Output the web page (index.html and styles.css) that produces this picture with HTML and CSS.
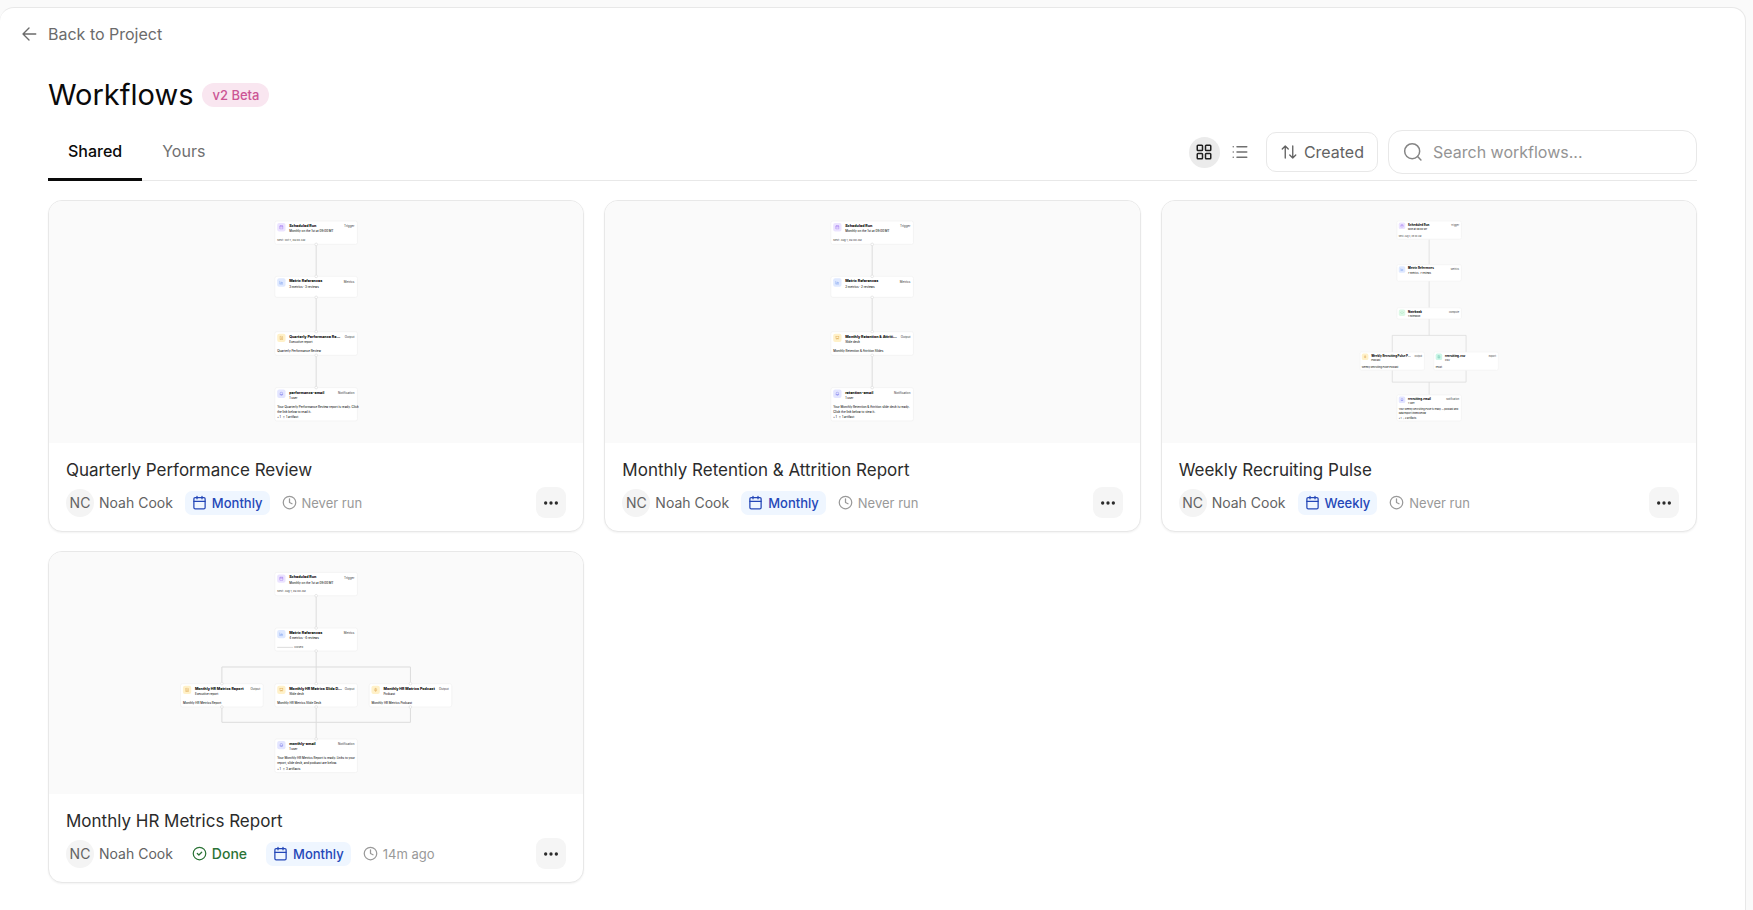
FILE: index.html
```html
<!DOCTYPE html>
<html lang="en">
<head>
<meta charset="UTF-8">
<meta name="viewport" content="width=device-width, initial-scale=1.0">
<title>Workflows</title>
<link rel="stylesheet" href="styles.css">
</head>
<body>
<!-- Shared icons -->
<svg class="sprite" aria-hidden="true">
  <symbol id="i-calendar" viewBox="0 0 24 24"><rect x="3" y="4" width="18" height="18" rx="2"/><path d="M8 2v4M16 2v4M3 10h18"/></symbol>
  <symbol id="i-clock" viewBox="0 0 24 24"><circle cx="12" cy="12" r="10"/><path d="M12 6v6l4 2"/></symbol>
  <symbol id="i-check" viewBox="0 0 24 24"><circle cx="12" cy="12" r="10"/><path d="m8.500 12 2.500 2.500 4.500-4.500"/></symbol>
  <symbol id="i-more" viewBox="0 0 24 24"><circle cx="4" cy="12" r="2.500"/><circle cx="12" cy="12" r="2.500"/><circle cx="20" cy="12" r="2.500"/></symbol>
  <symbol id="i-chart" viewBox="0 0 24 24"><path d="M3 3v18h18M8 17v-5M13 17V8M18 17v-7"/></symbol>
  <symbol id="i-file" viewBox="0 0 24 24"><path d="M5 2h10l4 4v16H5zM9 11h6M9 16h6"/></symbol>
  <symbol id="i-slides" viewBox="0 0 24 24"><path d="M2 4h20M4 4v12h16V4M8 21l4-5 4 5"/></symbol>
  <symbol id="i-mic" viewBox="0 0 24 24"><rect x="9" y="2" width="6" height="12" rx="3"/><path d="M5 11a7 7 0 0 0 14 0M12 18v4"/></symbol>
  <symbol id="i-bell" viewBox="0 0 24 24"><path d="M5 17V10a7 7 0 0 1 14 0v7zM3 17h18M10 21h4"/></symbol>
  <symbol id="i-code" viewBox="0 0 24 24"><path d="m8 6-6 6 6 6M16 6l6 6-6 6"/></symbol>
</svg>

<main class="panel">
  <a href="#" class="back-link">
    <svg class="icon" viewBox="0 0 24 24" width="18" height="18"><path d="M21 12H4M12 4l-8 8 8 8"/></svg>
    <span>Back to Project</span>
  </a>

  <div class="content">
    <div class="heading">
      <h1>Workflows</h1>
      <span class="beta">v2 Beta</span>
    </div>

    <div class="toolbar">
      <nav class="tabs">
        <a href="#" class="tab active">Shared</a>
        <a href="#" class="tab">Yours</a>
      </nav>
      <div class="controls">
        <div class="view-toggle">
          <button class="view-btn selected" aria-label="Grid view">
            <svg class="icon" viewBox="0 0 24 24" width="18" height="18"><rect x="3" y="3" width="7" height="7" rx="1"/><rect x="14" y="3" width="7" height="7" rx="1"/><rect x="3" y="14" width="7" height="7" rx="1"/><rect x="14" y="14" width="7" height="7" rx="1"/></svg>
          </button>
          <button class="view-btn" aria-label="List view">
            <svg class="icon" viewBox="0 0 24 24" width="18" height="18"><path d="M8 5h13M8 12h13M8 19h13M3 5h0M3 12h0M3 19h0"/></svg>
          </button>
        </div>
        <button class="sort-btn">
          <svg class="icon" viewBox="0 0 24 24" width="18" height="18"><path d="M7 20V4M3 8l4-4 4 4M17 4v16M13 16l4 4 4-4"/></svg>
          Created
        </button>
        <label class="search">
          <svg class="icon" viewBox="0 0 24 24" width="20" height="20"><circle cx="11" cy="11" r="9"/><path d="m17.500 17.500 4 4"/></svg>
          <input type="text" placeholder="Search workflows..." aria-label="Search workflows">
        </label>
      </div>
    </div>

    <div class="grid">
      <article class="card">
        <svg class="preview" viewBox="-802 0 1604 726">
          <path class="edge" d="M0 130V226M0 289V392M0 463V560"/>
          <g transform="translate(-124 60)">
            <rect class="node" width="248" height="70" rx="6"/>
            <rect class="tile violet" x="7" y="6" width="25" height="25" rx="6"/><use class="violet" href="#i-calendar" x="13" y="12" width="13" height="13"/>
            <text class="name" x="43" y="18">Scheduled Run</text><text class="kind" x="239" y="19">Trigger</text>
            <text class="sub" x="43" y="34">Monthly on the 1st at 09:00 MT</text><text class="note" x="7" y="59">Next: Oct 1, 09:00 AM</text>
          </g>
          <g transform="translate(-124 226)">
            <rect class="node" width="248" height="63" rx="6"/>
            <rect class="tile blue" x="7" y="6" width="25" height="25" rx="6"/><use class="blue" href="#i-chart" x="13" y="12" width="13" height="13"/>
            <text class="name" x="43" y="18">Metric References</text><text class="kind" x="239" y="19">Metrics</text>
            <text class="sub" x="43" y="34">3 metrics · 3 reviews</text>
          </g>
          <g transform="translate(-124 392)">
            <rect class="node" width="248" height="71" rx="6"/>
            <rect class="tile amber" x="7" y="6" width="25" height="25" rx="6"/><use class="amber" href="#i-file" x="13" y="12" width="13" height="13"/>
            <text class="name" x="43" y="18">Quarterly Performance Re...</text><text class="kind" x="239" y="19">Output</text>
            <text class="sub" x="43" y="34">Executive report</text><text class="body" x="7" y="62">Quarterly Performance Review</text>
          </g>
          <g transform="translate(-124 560)">
            <rect class="node" width="248" height="100" rx="6"/>
            <rect class="tile indigo" x="7" y="6" width="25" height="25" rx="6"/><use class="indigo" href="#i-bell" x="13" y="12" width="13" height="13"/>
            <text class="name" x="43" y="18">performance-email</text><text class="kind" x="239" y="19">Notification</text>
            <text class="sub" x="43" y="34">1 user</text>
            <text class="body" x="7" y="60">Your Quarterly Performance Review report is ready. Click</text><text class="body" x="7" y="75">the link below to read it.</text>
            <text class="body" x="7" y="92">◦ 1 &nbsp; ▯ 1 artifact</text>
          </g>
          <g class="port"><circle cy="130" r="4"/><circle cy="226" r="4"/><circle cy="289" r="4"/><circle cy="392" r="4"/><circle cy="463" r="4"/><circle cy="560" r="4"/></g>
        </svg>
        <div class="card-info">
          <h2>Quarterly Performance Review</h2>
          <div class="meta">
            <span class="owner"><span class="avatar">NC</span>Noah Cook</span>
            <span class="chip"><svg class="icon" width="15" height="15"><use href="#i-calendar"/></svg>Monthly</span>
            <span class="last-run"><svg class="icon" width="15" height="15"><use href="#i-clock"/></svg>Never run</span>
            <button class="more" aria-label="More actions"><svg width="16" height="16"><use href="#i-more"/></svg></button>
          </div>
        </div>
      </article>

      <article class="card">
        <svg class="preview" viewBox="-802 0 1604 726">
          <path class="edge" d="M0 130V226M0 289V392M0 463V560"/>
          <g transform="translate(-124 60)">
            <rect class="node" width="248" height="70" rx="6"/>
            <rect class="tile violet" x="7" y="6" width="25" height="25" rx="6"/><use class="violet" href="#i-calendar" x="13" y="12" width="13" height="13"/>
            <text class="name" x="43" y="18">Scheduled Run</text><text class="kind" x="239" y="19">Trigger</text>
            <text class="sub" x="43" y="34">Monthly on the 1st at 09:00 MT</text><text class="note" x="7" y="59">Next: Aug 1, 09:00 AM</text>
          </g>
          <g transform="translate(-124 226)">
            <rect class="node" width="248" height="63" rx="6"/>
            <rect class="tile blue" x="7" y="6" width="25" height="25" rx="6"/><use class="blue" href="#i-chart" x="13" y="12" width="13" height="13"/>
            <text class="name" x="43" y="18">Metric References</text><text class="kind" x="239" y="19">Metrics</text>
            <text class="sub" x="43" y="34">2 metrics · 2 reviews</text>
          </g>
          <g transform="translate(-124 392)">
            <rect class="node" width="248" height="71" rx="6"/>
            <rect class="tile amber" x="7" y="6" width="25" height="25" rx="6"/><use class="amber" href="#i-slides" x="13" y="12" width="13" height="13"/>
            <text class="name" x="43" y="18">Monthly Retention &amp; Attriti...</text><text class="kind" x="239" y="19">Output</text>
            <text class="sub" x="43" y="34">Slide deck</text><text class="body" x="7" y="62">Monthly Retention &amp; Attrition Slides</text>
          </g>
          <g transform="translate(-124 560)">
            <rect class="node" width="248" height="100" rx="6"/>
            <rect class="tile indigo" x="7" y="6" width="25" height="25" rx="6"/><use class="indigo" href="#i-bell" x="13" y="12" width="13" height="13"/>
            <text class="name" x="43" y="18">retention-email</text><text class="kind" x="239" y="19">Notification</text>
            <text class="sub" x="43" y="34">1 user</text>
            <text class="body" x="7" y="60">Your Monthly Retention &amp; Attrition slide deck is ready.</text><text class="body" x="7" y="75">Click the link below to view it.</text>
            <text class="body" x="7" y="92">◦ 1 &nbsp; ▯ 1 artifact</text>
          </g>
          <g class="port"><circle cy="130" r="4"/><circle cy="226" r="4"/><circle cy="289" r="4"/><circle cy="392" r="4"/><circle cy="463" r="4"/><circle cy="560" r="4"/></g>
        </svg>
        <div class="card-info">
          <h2>Monthly Retention &amp; Attrition Report</h2>
          <div class="meta">
            <span class="owner"><span class="avatar">NC</span>Noah Cook</span>
            <span class="chip"><svg class="icon" width="15" height="15"><use href="#i-calendar"/></svg>Monthly</span>
            <span class="last-run"><svg class="icon" width="15" height="15"><use href="#i-clock"/></svg>Never run</span>
            <button class="more" aria-label="More actions"><svg width="16" height="16"><use href="#i-more"/></svg></button>
          </div>
        </div>
      </article>

      <article class="card">
        <svg class="preview" viewBox="-1028 0 2056 931">
          <path class="edge" d="M0 147V245M0 308V411M0 454V517M-142 581V517H142V581M-142 651V697H142V651M0 697V746"/>
          <g transform="translate(-124 77)">
            <rect class="node" width="248" height="70" rx="6"/>
            <rect class="tile violet" x="7" y="6" width="25" height="25" rx="6"/><use class="violet" href="#i-calendar" x="13" y="12" width="13" height="13"/>
            <text class="name" x="43" y="18">Scheduled Run</text><text class="kind" x="239" y="19">Trigger</text>
            <text class="sub" x="43" y="34">Mon at 09:00 MT</text><text class="note" x="7" y="60">Next: Aug 3, 09:00 AM</text>
          </g>
          <g transform="translate(-124 245)">
            <rect class="node" width="248" height="63" rx="6"/>
            <rect class="tile blue" x="7" y="6" width="25" height="25" rx="6"/><use class="blue" href="#i-chart" x="13" y="12" width="13" height="13"/>
            <text class="name" x="43" y="18">Metric References</text><text class="kind" x="239" y="19">Metrics</text>
            <text class="sub" x="43" y="34">7 metrics · 7 reviews</text>
          </g>
          <g transform="translate(-124 411)">
            <rect class="node" width="248" height="43" rx="6"/>
            <rect class="tile green" x="7" y="6" width="25" height="25" rx="6"/><use class="green" href="#i-code" x="13" y="12" width="13" height="13"/>
            <text class="name" x="43" y="18">Notebook</text><text class="kind" x="239" y="19">Compute</text>
            <text class="sub" x="43" y="34">1 notebook</text>
          </g>
          <g transform="translate(-266 581)">
            <rect class="node" width="248" height="70" rx="6"/>
            <rect class="tile amber" x="7" y="6" width="25" height="25" rx="6"/><use class="amber" href="#i-mic" x="13" y="12" width="13" height="13"/>
            <text class="name" x="43" y="18">Weekly Recruiting Pulse P...</text><text class="kind" x="239" y="19">Output</text>
            <text class="sub" x="43" y="34">Podcast</text><text class="body" x="7" y="62">Weekly Recruiting Pulse Podcast</text>
          </g>
          <g transform="translate(18 581)">
            <rect class="node" width="248" height="70" rx="6"/>
            <rect class="tile teal" x="7" y="6" width="25" height="25" rx="6"/><use class="teal" href="#i-file" x="13" y="12" width="13" height="13"/>
            <text class="name" x="43" y="18">recruiting-csv</text><text class="kind" x="239" y="19">Export</text>
            <text class="sub" x="43" y="34">CSV</text><text class="body" x="7" y="62">result</text>
          </g>
          <g transform="translate(-124 746)">
            <rect class="node" width="248" height="100" rx="6"/>
            <rect class="tile indigo" x="7" y="6" width="25" height="25" rx="6"/><use class="indigo" href="#i-bell" x="13" y="12" width="13" height="13"/>
            <text class="name" x="43" y="18">recruiting-email</text><text class="kind" x="239" y="19">Notification</text>
            <text class="sub" x="43" y="34">1 user</text>
            <text class="body" x="7" y="60">Your Weekly Recruiting Pulse is ready — podcast and</text><text class="body" x="7" y="73">data export linked below.</text>
            <text class="body" x="7" y="92">◦ 1 &nbsp; ▯ 2 artifacts</text>
          </g>
        </svg>
        <div class="card-info">
          <h2>Weekly Recruiting Pulse</h2>
          <div class="meta">
            <span class="owner"><span class="avatar">NC</span>Noah Cook</span>
            <span class="chip"><svg class="icon" width="15" height="15"><use href="#i-calendar"/></svg>Weekly</span>
            <span class="last-run"><svg class="icon" width="15" height="15"><use href="#i-clock"/></svg>Never run</span>
            <button class="more" aria-label="More actions"><svg width="16" height="16"><use href="#i-more"/></svg></button>
          </div>
        </div>
      </article>

      <article class="card">
        <svg class="preview" viewBox="-802 0 1604 726">
          <path class="edge" d="M0 131V228M0 297V395M-283 395V345H283V395M-283 465V511H283V465M0 465V561"/>
          <g transform="translate(-124 61)">
            <rect class="node" width="248" height="70" rx="6"/>
            <rect class="tile violet" x="7" y="6" width="25" height="25" rx="6"/><use class="violet" href="#i-calendar" x="13" y="12" width="13" height="13"/>
            <text class="name" x="43" y="18">Scheduled Run</text><text class="kind" x="239" y="19">Trigger</text>
            <text class="sub" x="43" y="34">Monthly on the 1st at 09:00 MT</text><text class="note" x="7" y="59">Next: Aug 1, 09:00 AM</text>
          </g>
          <g transform="translate(-124 228)">
            <rect class="node" width="248" height="69" rx="6"/>
            <rect class="tile blue" x="7" y="6" width="25" height="25" rx="6"/><use class="blue" href="#i-chart" x="13" y="12" width="13" height="13"/>
            <text class="name" x="43" y="18">Metric References</text><text class="kind" x="239" y="19">Metrics</text>
            <text class="sub" x="43" y="34">4 metrics · 4 reviews</text>
            <path class="edge" d="M7 58h48"/><text class="note" x="58" y="61">Closed</text>
          </g>
          <g transform="translate(-407 395)">
            <rect class="node" width="248" height="70" rx="6"/>
            <rect class="tile amber" x="7" y="6" width="25" height="25" rx="6"/><use class="amber" href="#i-file" x="13" y="12" width="13" height="13"/>
            <text class="name" x="43" y="18">Monthly HR Metrics Report</text><text class="kind" x="239" y="19">Output</text>
            <text class="sub" x="43" y="34">Executive report</text><text class="body" x="7" y="62">Monthly HR Metrics Report</text>
          </g>
          <g transform="translate(-124 395)">
            <rect class="node" width="248" height="70" rx="6"/>
            <rect class="tile amber" x="7" y="6" width="25" height="25" rx="6"/><use class="amber" href="#i-slides" x="13" y="12" width="13" height="13"/>
            <text class="name" x="43" y="18">Monthly HR Metrics Slide D...</text><text class="kind" x="239" y="19">Output</text>
            <text class="sub" x="43" y="34">Slide deck</text><text class="body" x="7" y="62">Monthly HR Metrics Slide Deck</text>
          </g>
          <g transform="translate(159 395)">
            <rect class="node" width="248" height="70" rx="6"/>
            <rect class="tile amber" x="7" y="6" width="25" height="25" rx="6"/><use class="amber" href="#i-mic" x="13" y="12" width="13" height="13"/>
            <text class="name" x="43" y="18">Monthly HR Metrics Podcast</text><text class="kind" x="239" y="19">Output</text>
            <text class="sub" x="43" y="34">Podcast</text><text class="body" x="7" y="62">Monthly HR Metrics Podcast</text>
          </g>
          <g transform="translate(-124 561)">
            <rect class="node" width="248" height="101" rx="6"/>
            <rect class="tile indigo" x="7" y="6" width="25" height="25" rx="6"/><use class="indigo" href="#i-bell" x="13" y="12" width="13" height="13"/>
            <text class="name" x="43" y="18">monthly-email</text><text class="kind" x="239" y="19">Notification</text>
            <text class="sub" x="43" y="34">1 user</text>
            <text class="body" x="7" y="61">Your Monthly HR Metrics Report is ready. Links to your</text><text class="body" x="7" y="76">report, slide deck, and podcast are below.</text>
            <text class="body" x="7" y="92">◦ 1 &nbsp; ▯ 3 artifacts</text>
          </g>
          <g class="port"><circle cy="131" r="4"/><circle cy="228" r="4"/><circle cy="297" r="4"/><circle cx="-283" cy="395" r="4"/><circle cy="395" r="4"/><circle cx="283" cy="395" r="4"/><circle cx="-283" cy="465" r="4"/><circle cy="465" r="4"/><circle cx="283" cy="465" r="4"/><circle cy="561" r="4"/></g>
        </svg>
        <div class="card-info">
          <h2>Monthly HR Metrics Report</h2>
          <div class="meta">
            <span class="owner"><span class="avatar">NC</span>Noah Cook</span>
            <span class="chip done"><svg class="icon" width="15" height="15"><use href="#i-check"/></svg>Done</span>
            <span class="chip"><svg class="icon" width="15" height="15"><use href="#i-calendar"/></svg>Monthly</span>
            <span class="last-run"><svg class="icon" width="15" height="15"><use href="#i-clock"/></svg>14m ago</span>
            <button class="more" aria-label="More actions"><svg width="16" height="16"><use href="#i-more"/></svg></button>
          </div>
        </div>
      </article>
    </div>
  </div>
</main>
</body>
</html>
```
FILE: styles.css
```css
* { box-sizing: border-box; }

body {
  margin: 0;
  padding: 7px 7px 0 0;
  background: #fafafa;
  color: #0a0a0a;
  font-family: Inter, "Liberation Sans", sans-serif;
  font-size: 16px;
  line-height: 24px;
}

h1, h2 { margin: 0; font-weight: 400; }
a { color: inherit; text-decoration: none; }
button, input { font: inherit; color: inherit; }
button { border: none; background: none; padding: 0; cursor: pointer; }
svg { display: block; flex: none; }

.sprite { position: absolute; width: 0; height: 0; }

.icon {
  fill: none;
  stroke: currentColor;
  stroke-width: 2;
  stroke-linecap: round;
  stroke-linejoin: round;
}

.panel {
  min-height: calc(100vh - 7px);
  padding: 14px 48px 0;
  background: #fff;
  border: 1px solid #e8e8e8;
  border-width: 1px 1px 0 0;
  border-radius: 14px 14px 0 0;
}

.back-link {
  display: inline-flex;
  align-items: center;
  gap: 10px;
  margin-left: -28px;
  color: #6b6b6b;
}

.heading {
  display: flex;
  align-items: center;
  gap: 9px;
  margin-top: 27px;
}
.heading h1 { font-size: 29px; line-height: 38px; }
.beta {
  padding: 0 10px;
  border-radius: 12px;
  background: #f9e6f0;
  color: #cc5595;
  font-size: 13px;
  font-weight: 500;
}

/* Tabs and controls */
.toolbar {
  display: flex;
  justify-content: space-between;
  align-items: flex-end;
  margin-top: 16px;
  border-bottom: 1px solid #e8e8e8;
}
.tabs { display: flex; }
.tab {
  padding: 8px 20px 15px;
  color: #707070;
  border-bottom: 2px solid transparent;
}
.tab.active {
  margin-bottom: -1px;
  border-bottom: 3px solid #0a0a0a;
  color: #0a0a0a;
  font-weight: 500;
}
.controls { display: flex; align-items: center; gap: 10px; padding-bottom: 6px; }
.view-toggle { display: flex; gap: 5px; color: #707070; }
.view-btn {
  display: flex;
  align-items: center;
  justify-content: center;
  width: 31px;
  height: 31px;
  border-radius: 50%;
}
.view-btn.selected { background: #ebebeb; color: #1f1f1f; }
.sort-btn {
  display: flex;
  align-items: center;
  gap: 6px;
  height: 40px;
  padding: 0 13px;
  border: 1px solid #e8e8e8;
  border-radius: 10px;
  color: #636363;
}
.search {
  display: flex;
  align-items: center;
  gap: 10px;
  width: 309px;
  height: 44px;
  padding: 0 14px;
  border: 1px solid #e8e8e8;
  border-radius: 14px;
  color: #858585;
}
.search input {
  flex: 1;
  min-width: 0;
  padding: 0;
  border: none;
  outline: none;
  background: none;
}
.search input::placeholder { color: #949494; opacity: 1; }
.back-link .icon, .sort-btn .icon, .search .icon { stroke-width: 1.8; }

/* Workflow cards */
.grid {
  display: grid;
  grid-template-columns: repeat(3, 1fr);
  gap: 19px 20px;
  padding: 19px 0;
}
.card {
  overflow: hidden;
  background: #fff;
  border: 1px solid #e8e8e8;
  border-radius: 14px;
  box-shadow: 0 1px 2px rgba(0, 0, 0, 0.05);
}
.preview { width: 100%; height: 242px; background: #fafafa; }
.card-info { padding: 14px 17px 13px; }
.card-info h2 { color: #2b2b2b; font-size: 17px; line-height: 26px; }
.meta {
  display: flex;
  align-items: center;
  gap: 12px;
  margin-top: 4px;
  font-size: 13px;
}
.owner { display: flex; align-items: center; gap: 5px; color: #636363; font-size: 14px; }
.avatar {
  width: 28px;
  height: 28px;
  border-radius: 50%;
  background: #f4f4f4;
  line-height: 28px;
  text-align: center;
}
.chip {
  display: flex;
  align-items: center;
  gap: 5px;
  padding: 0 7px;
  border-radius: 7px;
  background: #eff6ff;
  color: #2447b8;
  font-weight: 500;
}
.chip.done { background: none; color: #2b7336; font-size: 14px; }
.last-run { display: flex; align-items: center; gap: 5px; color: #999; }
.more {
  display: flex;
  align-items: center;
  justify-content: center;
  width: 30px;
  height: 31px;
  margin-left: auto;
  border-radius: 9px;
  background: #f5f5f5;
  fill: #2b2b2b;
}

/* Diagram thumbnails */
.node { fill: #fff; stroke: #f0f0f0; stroke-width: 2; }
.edge { fill: none; stroke: #dcdcdc; stroke-width: 3; }
.port circle { fill: #fff; stroke: #dcdcdc; stroke-width: 2; }
.preview text { fill: #222; font-weight: 500; }
.preview .name { font-size: 11px; font-weight: 800; fill: #0a0a0a; }
.preview .sub { font-size: 9px; }
.preview .note { font-size: 8px; fill: #555; }
.preview .kind { font-size: 9px; fill: #555; text-anchor: end; }
.preview .body { font-size: 9px; }
.preview use { fill: none; stroke-width: 2; }
.tile.violet { fill: #ebe3ff; }
.tile.blue { fill: #dfe9ff; }
.tile.amber { fill: #fff1c9; }
.tile.indigo { fill: #e3e5ff; }
.tile.green { fill: #dcf8e6; }
.tile.teal { fill: #cdf6e8; }
use.violet { stroke: #8048e8; }
use.blue { stroke: #4c7fe8; }
use.amber { stroke: #d08a20; }
use.indigo { stroke: #6a6ae8; }
use.green { stroke: #45b873; }
use.teal { stroke: #20a080; }
```
